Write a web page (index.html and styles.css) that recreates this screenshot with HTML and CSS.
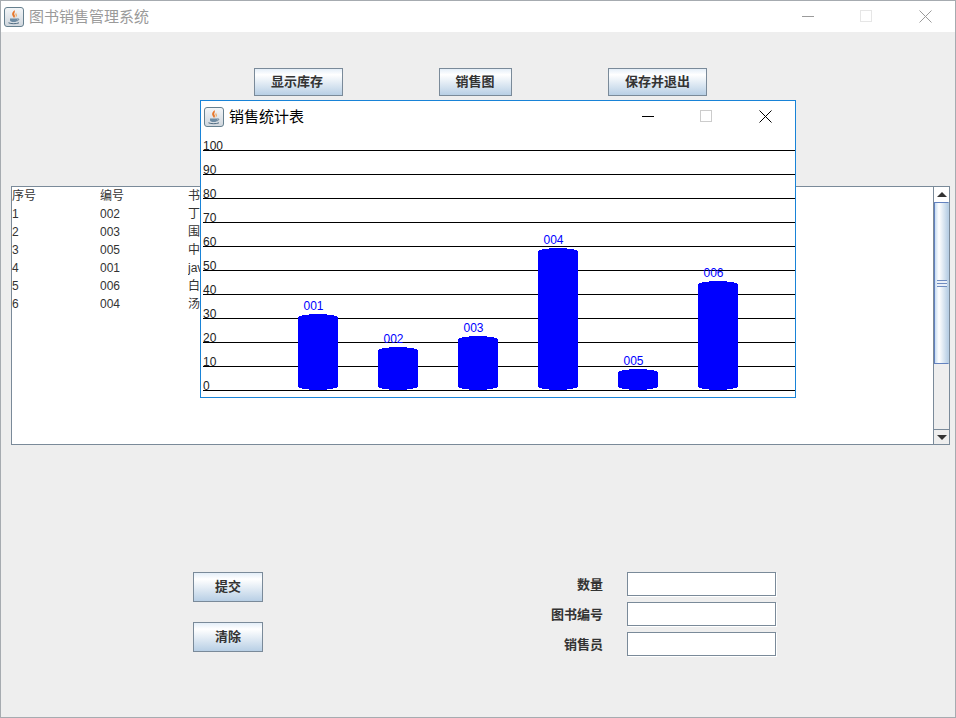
FILE: index.html
```html
<!DOCTYPE html>
<html lang="zh">
<head>
<meta charset="utf-8">
<title>图书销售管理系统</title>
<link rel="stylesheet" href="styles.css">
</head>
<body>
<svg class="defs" width="0" height="0" aria-hidden="true">
  <defs>
    <linearGradient id="tile" x1="0" y1="0" x2="0" y2="1">
      <stop offset="0" stop-color="#f4f6f8"/>
      <stop offset="1" stop-color="#cfd6dd"/>
    </linearGradient>
    <symbol id="java" viewBox="0 0 20 20">
      <rect x="0.5" y="0.5" width="19" height="19" rx="2.5" fill="url(#tile)" stroke="#66808f"/>
      <path d="M10.5 3C9 5 7.5 6 8.5 8.5 9 9.700 9.800 10.300 10 11 11.500 9.500 11 8.500 10.200 7.300 10 6 11.500 5 10.500 3Z" fill="#e8762a"/>
      <path d="M12.500 5.500C11.500 6.500 11 7 11.800 8.500 12 9.300 11.800 10 11.500 10.500 13 9.500 13.300 8 12.300 7 12 6.500 12.300 6 12.500 5.500Z" fill="#f0a050"/>
      <path d="M6 11.500H13.500V13C13.500 14.500 12 15 9.700 15 7.500 15 6 14.500 6 13Z" fill="#6d8ba3"/>
      <path d="M13.500 11.800C15 11.500 15.500 13 13.300 13.800" fill="none" stroke="#5d7a90"/>
      <path d="M4.500 15.800C7 17 12.500 17 15 15.800" fill="none" stroke="#4f6c82"/>
    </symbol>
    <symbol id="min" viewBox="0 0 12 13"><path d="M0 6.500H12" stroke="currentColor" fill="none"/></symbol>
    <symbol id="max" viewBox="0 0 13 13"><rect x="0.500" y="0.500" width="11" height="11" fill="none" stroke="currentColor"/></symbol>
    <symbol id="close" viewBox="0 0 13 13"><path d="M0.500 0.500L12.500 12.500M12.500 0.500L0.500 12.500" stroke="currentColor" fill="none"/></symbol>
  </defs>
</svg>

<div class="window main-window">
  <header class="titlebar titlebar-main">
    <svg class="app-icon"><use href="#java"/></svg>
    <span class="title">图书销售管理系统</span>
    <div class="controls">
      <svg class="ctl-min"><use href="#min"/></svg>
      <svg class="ctl ctl-max"><use href="#max"/></svg>
      <svg class="ctl"><use href="#close"/></svg>
    </div>
  </header>

  <main class="content">
    <div class="toolbar">
      <button class="btn btn-stock">显示库存</button>
      <button class="btn btn-chart">销售图</button>
      <button class="btn btn-save">保存并退出</button>
    </div>

    <section class="pane">
      <div class="table-view">
        <div class="row"><span>序号</span><span>编号</span><span>书名</span></div>
        <div class="row"><span>1</span><span>002</span><span>丁丁历险记</span></div>
        <div class="row"><span>2</span><span>003</span><span>围城</span></div>
        <div class="row"><span>3</span><span>005</span><span>中国历史</span></div>
        <div class="row"><span>4</span><span>001</span><span>java编程</span></div>
        <div class="row"><span>5</span><span>006</span><span>白夜行</span></div>
        <div class="row"><span>6</span><span>004</span><span>汤姆索亚</span></div>
      </div>
      <div class="scrollbar">
        <div class="arrow arrow-up"><i class="tri tri-up"></i></div>
        <div class="thumb"><i class="grip"></i></div>
        <div class="track"></div>
        <div class="arrow arrow-down"><i class="tri tri-down"></i></div>
      </div>
    </section>

    <section class="bottom">
      <div class="actions">
        <button class="btn btn-action">提交</button>
        <button class="btn btn-action">清除</button>
      </div>
      <form class="form">
        <label class="lbl">数量</label><input class="field" type="text">
        <label class="lbl">图书编号</label><input class="field" type="text">
        <label class="lbl">销售员</label><input class="field" type="text">
      </form>
    </section>
  </main>
</div>

<div class="window chart-window">
  <header class="titlebar titlebar-chart">
    <svg class="app-icon"><use href="#java"/></svg>
    <span class="title">销售统计表</span>
    <div class="controls">
      <svg class="ctl-min"><use href="#min"/></svg>
      <svg class="ctl ctl-max"><use href="#max"/></svg>
      <svg class="ctl"><use href="#close"/></svg>
    </div>
  </header>
  <svg class="chart" viewBox="201 132 594 265" width="594" height="265">
    <g class="grid" shape-rendering="crispEdges">
      <path d="M203 150.500H795M203 174.500H795M203 198.500H795M203 222.500H795M203 246.500H795M203 270.500H795M203 294.500H795M203 318.500H795M203 342.500H795M203 366.500H795M203 390.500H795"/>
    </g>
    <g class="axis">
      <text x="203" y="150">100</text>
      <text x="203" y="174">90</text>
      <text x="203" y="198">80</text>
      <text x="203" y="222">70</text>
      <text x="203" y="246">60</text>
      <text x="203" y="270">50</text>
      <text x="203" y="294">40</text>
      <text x="203" y="318">30</text>
      <text x="203" y="342">20</text>
      <text x="203" y="366">10</text>
      <text x="203" y="390">0</text>
    </g>
    <g class="bars" shape-rendering="crispEdges">
      <rect x="298" y="314" width="40" height="76" rx="20" ry="4"/>
      <rect x="378" y="347" width="40" height="43" rx="20" ry="4"/>
      <rect x="458" y="336" width="40" height="54" rx="20" ry="4"/>
      <rect x="538" y="248" width="40" height="142" rx="20" ry="4"/>
      <rect x="618" y="369" width="40" height="21" rx="20" ry="4"/>
      <rect x="698" y="281" width="40" height="109" rx="20" ry="4"/>
    </g>
    <g class="bar-labels">
      <text x="303.500" y="310">001</text>
      <text x="383.500" y="343">002</text>
      <text x="463.500" y="332">003</text>
      <text x="543.500" y="244">004</text>
      <text x="623.500" y="365">005</text>
      <text x="703.500" y="277">006</text>
    </g>
  </svg>
</div>
</body>
</html>
```

FILE: styles.css
```css
* { box-sizing: border-box; }

html, body {
  margin: 0;
  padding: 0;
  height: 718px;
  overflow: hidden;
}

body {
  position: relative;
  font-family: "Liberation Sans", "Noto Sans CJK SC", sans-serif;
  font-size: 12px;
  color: #333333;
  background: #eeeeee;
}

.defs { position: absolute; }

.main-window {
  display: flex;
  flex-direction: column;
  width: 956px;
  height: 718px;
  border: 1px solid #a6abb0;
  background: #eeeeee;
}

.titlebar {
  display: flex;
  align-items: center;
  flex: none;
  height: 31px;
  padding-left: 3px;
  padding-right: 23px;
  background: #ffffff;
}

.app-icon {
  width: 20px;
  height: 20px;
  flex: none;
}

.title {
  margin-left: 5px;
  padding-bottom: 2px;
  font-family: "Noto Sans CJK SC", sans-serif;
  font-size: 15px;
}

.titlebar-main .title { color: #9a9a9a; }
.titlebar-chart .title { color: #000000; }

.controls {
  display: flex;
  align-items: center;
  gap: 46px;
  margin-left: auto;
}

.ctl-min { width: 12px; height: 13px; }
.ctl { width: 13px; height: 13px; }

.titlebar-main .controls { color: #9b9b9b; }
.titlebar-main .ctl-max { color: #e6e6e6; }
.titlebar-chart .controls { color: #000000; }
.titlebar-chart .ctl-max { color: #cccccc; }

.content { flex: 1; }

.toolbar {
  display: flex;
  gap: 96px;
  margin-top: 36px;
  padding-left: 253px;
}

.btn {
  height: 28px;
  padding: 0 0 3px;
  border: 1px solid #7a8a99;
  background: linear-gradient(#e4eef8 0%, #ffffff 22%, #b8cfe5 100%);
  color: #333333;
  font-family: "Noto Sans CJK SC", sans-serif;
  font-size: 13px;
  font-weight: 700;
  line-height: 1;
}

.btn-stock { width: 89px; padding-right: 3px; }
.btn-chart { width: 73px; padding-right: 1px; }
.btn-save { width: 99px; }

.pane {
  display: flex;
  width: 939px;
  height: 259px;
  margin-top: 90px;
  margin-left: 10px;
  border: 1px solid #7a8a99;
  background: #ffffff;
}

.table-view {
  flex: 1;
  overflow: hidden;
}

.row {
  display: grid;
  grid-template-columns: 88px 88px 88px;
  height: 18px;
  line-height: 18px;
  color: #333333;
}

.row span { white-space: nowrap; overflow: hidden; }

.scrollbar {
  display: flex;
  flex-direction: column;
  flex: none;
  width: 16px;
  border-left: 1px solid #7a8a99;
  background: #eeeeee;
}

.arrow {
  display: flex;
  align-items: center;
  justify-content: center;
  flex: none;
  height: 15px;
  background: #ffffff;
}

.arrow-down { border-top: 1px solid #7a8a99; background: #eeeeee; }

.tri {
  width: 0;
  height: 0;
  border-left: 5px solid transparent;
  border-right: 5px solid transparent;
}

.tri-up { border-bottom: 5px solid #333333; }
.tri-down { border-top: 5px solid #333333; }

.thumb {
  display: flex;
  align-items: center;
  justify-content: center;
  flex: none;
  height: 162px;
  border: 1px solid #6382bf;
  border-right-color: #b8cfe5;
  background: linear-gradient(90deg, #c8ddf2 0%, #ffffff 30%, #b8cfe5 100%);
}

.grip {
  display: block;
  width: 10px;
  height: 7px;
  background: repeating-linear-gradient(#6f8cc0 0, #6f8cc0 1px, #eaf0f8 1px, #eaf0f8 3px);
}

.track { flex: 1; }

.bottom {
  display: flex;
  align-items: flex-start;
  margin-top: 127px;
  padding-left: 192px;
}

.actions {
  display: flex;
  flex-direction: column;
  gap: 20px;
  flex: none;
}

.btn-action {
  width: 70px;
  height: 30px;
}

.form {
  display: grid;
  grid-template-columns: 100px 149px;
  column-gap: 24px;
  row-gap: 6px;
  margin-left: 240px;
}

.lbl {
  align-self: center;
  text-align: right;
  color: #333333;
  font-family: "Noto Sans CJK SC", sans-serif;
  font-size: 13px;
  font-weight: 700;
  line-height: 24px;
}

.field {
  width: 149px;
  height: 24px;
  padding: 0;
  border: 1px solid #7a8a99;
  border-radius: 0;
  background: #ffffff;
  box-shadow: 1px 1px 0 #ffffff;
}

.chart-window {
  position: absolute;
  left: 200px;
  top: 100px;
  width: 596px;
  height: 298px;
  border: 1px solid #1883d7;
  background: #ffffff;
}

.chart { display: block; }

.grid path { stroke: #000000; fill: none; }

.axis text,
.bar-labels text {
  font-family: "Liberation Sans", sans-serif;
  font-size: 12px;
}

.axis text { fill: #222222; }
.bar-labels text { fill: #0000ff; }
.bars rect { fill: #0000ff; }
```
